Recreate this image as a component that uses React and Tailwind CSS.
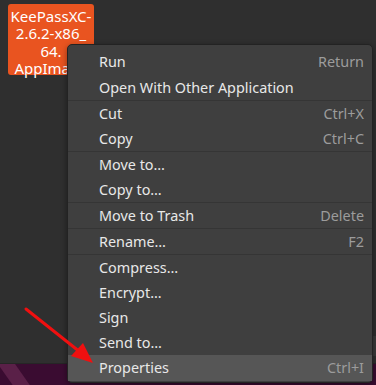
import React from 'react';

const items = [
  { label: 'Run', shortcut: 'Return', h: 'h-[26px]' },
  { label: 'Open With Other Application', sep: true },
  { label: 'Cut', shortcut: 'Ctrl+X' },
  { label: 'Copy', shortcut: 'Ctrl+C', sep: true },
  { label: 'Move to…' },
  { label: 'Copy to…', sep: true },
  { label: 'Move to Trash', shortcut: 'Delete', sep: true },
  { label: 'Rename…', shortcut: 'F2', sep: true },
  { label: 'Compress…' },
  { label: 'Encrypt...' },
  { label: 'Sign' },
  { label: 'Send to…' },
  { label: 'Properties', shortcut: 'Ctrl+I', active: true, h: 'h-[26px]' },
];

const App = () => {
  return (
    <div
      className="relative w-[376px] h-[385px] overflow-hidden flex flex-col bg-[#2f2f2f]"
      style={{ fontFamily: '"Noto Sans", "DejaVu Sans", sans-serif' }}
    >
      {/* desktop area */}
      <div className="h-[364px] bg-[#2f2f2f] border-b border-[#262626]" />
      <div className="flex-1 bg-[#3a0c31] relative overflow-hidden">
        <div className="absolute left-[10px] top-[-10px] w-[14px] h-[50px] bg-[#5a2048] rotate-[-35deg]" />
      </div>

      {/* desktop icon */}
      <div className="absolute left-[8px] top-[4px] w-[86px] h-[71px] rounded-[3px] bg-[#e95420] pt-[4px] text-center text-white text-[15px] leading-[17.3px]">
        <div>KeePassXC-</div>
        <div>2.6.2-x86_</div>
        <div>64.</div>
        <div>AppImage</div>
      </div>

      {/* bit of window at the right edge */}
      <div className="absolute left-[372px] top-[336px] w-[4px] h-[20px] bg-[#3a3a3a]" />

      {/* context menu */}
      <div className="absolute left-[67px] top-[44px] w-[306px] rounded-[5px] border border-[#232323] bg-[#3f3f3f] pt-[4px] pb-[1px] shadow-[0_2px_6px_rgba(0,0,0,0.4)]">
        {items.map((it) => (
          <div key={it.label}>
            <div
              className={`flex items-center justify-between pl-[31px] pr-[8px] text-[14.4px] ${it.h || 'h-[25px]'} ${
                it.active ? 'bg-[#565656]' : ''
              }`}
            >
              <span className="text-[#e8e8e8]">{it.label}</span>
              {it.shortcut && <span className="text-[#9c9c9c]">{it.shortcut}</span>}
            </div>
            {it.sep && <div className="h-px bg-[#353535]" />}
          </div>
        ))}
      </div>

      {/* red arrow */}
      <svg className="absolute left-0 top-0" width="376" height="385" viewBox="0 0 376 385">
        <line x1="26" y1="309" x2="80" y2="352" stroke="#f01010" strokeWidth="3" strokeLinecap="round" />
        <polygon points="93,363 71,356 83,343" fill="#f01010" />
      </svg>
    </div>
  );
};

export default App;
